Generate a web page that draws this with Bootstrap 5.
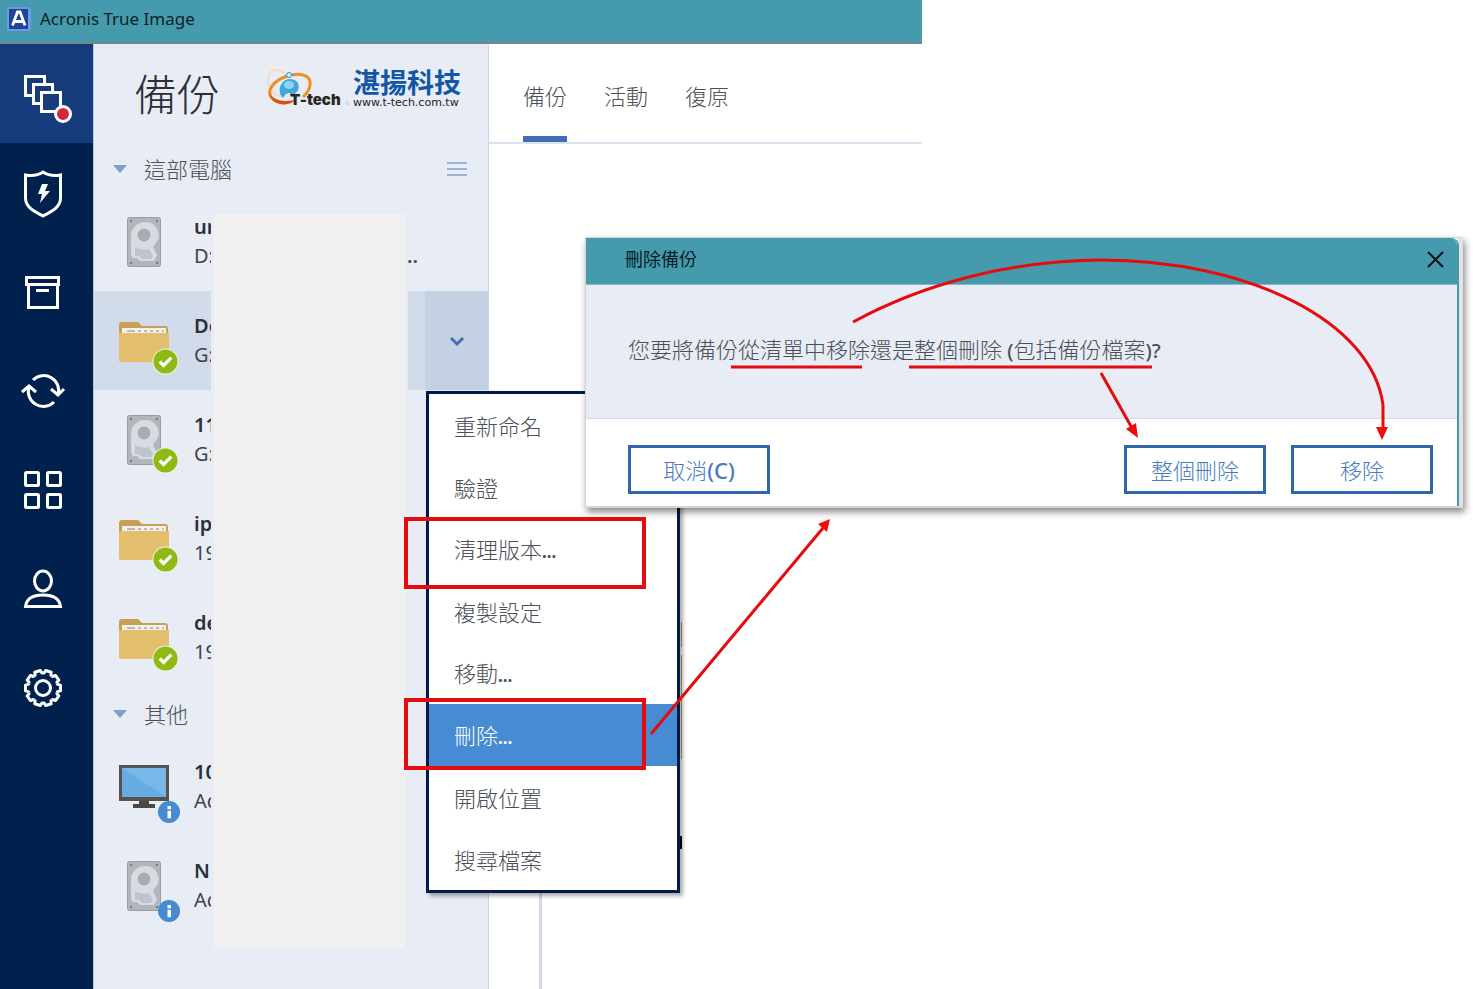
<!DOCTYPE html>
<html lang="zh-Hant">
<head>
<meta charset="utf-8">
<meta name="viewport" content="width=device-width, initial-scale=1">
<title>Acronis True Image</title>
<link href="https://cdn.jsdelivr.net/npm/bootstrap@5.3.0/dist/css/bootstrap.min.css" rel="stylesheet">
<style>
:root{--teal:#459bad;--navy:#00204d;--pane:#e7ecf5;--red:#e60b0f;--ink:#4c5058}
body{font-family:"Noto Sans","Noto Sans CJK TC",sans-serif;color:var(--ink);background:#fff;font-size:22px;line-height:30px}
.stage{min-height:100vh}
.app-window{width:62.6%;min-height:100vh}
.title-strip{height:44px;background:var(--teal);border-bottom:2px solid #71878e;color:#0c1f26;font-size:17px;line-height:24px;padding:0 7px 4px;gap:9px}
.rail{width:93px;background:var(--navy)}
.rail a{height:99px;color:#fff;padding-right:7px}
.rail a.active{background:#163c7b}
.side{width:396px;background:var(--pane);border-left:1px solid #b4c6e0;border-right:1px solid #cbd7e8}
.side-head{height:98px;padding:4px 27px 0 40px}
.side-head h1{font-size:43px;line-height:60px;font-weight:300;margin:0;color:#2b2f36}
.brand-block{padding-bottom:12px}
.section-row{height:50px;padding:4px 21px 0 19px}
.section-row h2{font-size:22px;line-height:30px;margin:0 0 0 17px;font-weight:300}
.entry{height:99px;padding-left:25px}
.entry.selected{background:#d1dbea}
.entry-text{width:17px;margin-left:25px;padding-top:20px;font-size:20px;line-height:29px;white-space:nowrap;overflow:hidden;color:#3e434c}
.entry-text b{font-weight:600;color:#2a2f38}
.dots{padding:49px 70px 0 0;font-size:20px;line-height:29px;font-weight:600}
.drop-toggle{width:63px;background:#c3d1e3;border:0;padding:0 0 4px}
.cover{left:211px;top:167px;width:197px;height:740px;background:#f1f1f1;border:3px solid var(--pane)}
.logo-name{font-size:27px;line-height:28px;font-weight:700;color:#1257a6}
.logo-url{font-family:"DejaVu Sans",sans-serif;font-size:11px;line-height:12px;color:#222}
.tabs-row{height:100px;border-bottom:2px solid #dbe2f0;padding-left:34px;gap:37px}
.tabs-row a{color:var(--ink);height:98px;padding-top:37px;text-decoration:none;font-weight:300}
.tabs-row a.active{border-bottom:6px solid #426db3}
.content-rule{width:53px;margin-top:600px;border-right:3px solid #cfd9eb}
.ctx-menu{left:426px;top:391px;width:254px;background:#fff;border:3px solid #001b4b;box-shadow:3px 3px 4px #00000055}
.ctx-menu button{height:62px;border:0;background:#fff;color:var(--ink);text-align:left;padding:2px 0 0 25px;font-weight:300}
.ctx-menu button.active{background:#478bd3;color:#fff}
.ctx-menu i{font-style:normal;font-weight:700;font-size:17px}
.dlg{left:585px;right:10px;top:237px;border:1px solid #d5d5d5;border-right:4px solid #e2e2e2;border-bottom:2px solid #d5d5d5;background:#ededed;box-shadow:2px 4px 7px #00000077}
.dlg-inner{border-right:2px solid var(--teal);border-top-right-radius:8px;background:#fff;overflow:hidden}
.dlg-head{height:47px;background:var(--teal);border-bottom:1px solid #8fb4c6;padding:0 12px 4px 39px;color:#061d24}
.dlg-head h2{font-size:18px;line-height:24px;margin:0;font-weight:400}
.dlg-head button{border:0;background:none;padding:0;width:20px;height:20px;display:flex}
.dlg-body{height:134px;background:var(--pane);border-bottom:1px solid #cfdbe9;padding:0 20px 3px 42px;font-weight:300}
.dlg-body span{font-weight:500;font-size:20px}
.dlg-foot{height:87px;padding:14px 24px 0 42px;gap:25px}
.dlg-foot button{width:142px;height:49px;background:#fff;border:3px solid #2f66ab;color:#4a7bbd;padding:1px 0 0;font-weight:300}
.dlg-foot span{font-weight:500}
.marks{left:0;top:0;pointer-events:none}
</style>
</head>
<body>
<svg width="0" height="0" class="position-absolute" aria-hidden="true">
  <defs>
    <symbol id="hdd" viewBox="0 0 54 54">
      <rect x="8.500" y="1.500" width="33" height="49" rx="2" fill="#b1b6ba" stroke="#989da1"/>
      <path d="M26 6a13 13 0 0 1 10 22q-3 3-1 5l3 6-3 6H21l-3-3h-4l-2-3V20A14 14 0 0 1 26 6z" fill="#d7dce2"/>
      <path d="M16 31q6 4 14 2l4 7-2 3H23l-3-3h-4z" fill="#bdc4cf"/>
      <circle cx="25" cy="19" r="6.500" fill="#a8adb1"/>
      <g fill="#777c80"><circle cx="12" cy="5" r="1.200"/><circle cx="38" cy="5" r="1.200"/><circle cx="12" cy="47" r="1.200"/><circle cx="38" cy="47" r="1.200"/></g>
    </symbol>
    <symbol id="folder" viewBox="0 0 54 54">
      <path d="M0 10q0-3 3-3h16l4 4h23q3 0 3 3v10H0z" fill="#c7a057"/>
      <rect x="3" y="13" width="44" height="9" fill="#f3f1ea"/>
      <path d="M8 16h8m3 0h3m3 0h3m3 0h3m3 0h3m3 0h2" stroke="#b9b9b9" stroke-width="2"/>
      <path d="M0 18h50v27q0 2-2 2H2q-2 0-2-2z" fill="#e2be6d"/>
    </symbol>
    <symbol id="monitor" viewBox="0 0 54 54">
      <path d="M0 4h50v36H0z" fill="#55524f"/><path d="M3 7h44v29H3z" fill="#66abe2"/><path d="M3 7h44v29z" fill="#78b7e7"/>
      <path d="M20 40h10v3h6v4H14v-4h6z" fill="#4b4845"/>
    </symbol>
    <symbol id="ok" viewBox="0 0 28 28"><circle cx="14" cy="14" r="13.500" fill="#eef3e6"/><circle cx="14" cy="14" r="12.500" fill="#8fba14"/><path d="M8 14l4 4 8-8" fill="none" stroke="#fff" stroke-width="3.400"/></symbol>
    <symbol id="info" viewBox="0 0 28 28"><circle cx="14" cy="14" r="11" fill="#468ad2"/><path d="M12.500 8h3.500v3.200h-3.500zM12.500 12.700h3.500v7.600h-3.500z" fill="#fff"/></symbol>
    <path id="tooth" d="M-4.600-14.200L-3.600-14.600-2.900-17.500H2.900L3.600-14.600 4.600-14.200"/>
  </defs>
</svg>

<div class="stage position-relative">
  <div class="app-window d-flex flex-column">
    <header class="title-strip d-flex align-items-center">
      <svg width="24" height="24" viewBox="0 0 24 24" aria-hidden="true"><rect width="24" height="24" rx="2" fill="#6b9be2"/><rect x="2" y="2" width="19" height="20" fill="#20429a"/><path d="M5.500 18.500L10.500 5h2.500l5 13.500M7.500 14.500h8.500" fill="none" stroke="#fff" stroke-width="2.800"/></svg>
      <span>Acronis True Image</span>
    </header>
    <div class="d-flex flex-grow-1 position-relative">
      <nav class="rail d-flex flex-column flex-shrink-0" aria-label="主選單">
        <a href="#" class="active d-flex align-items-center justify-content-center" aria-label="備份"><svg width="60" height="60" viewBox="0 0 60 60" fill="#163c7b" stroke="#fff" stroke-width="3"><path d="M12.500 12.500h19v19h-19z"/><path d="M20.500 20.500h19v19h-19z"/><path d="M28.500 28.500h19v19h-19z"/><circle cx="50" cy="50" r="7.500" fill="#d0283e"/></svg></a>
        <a href="#" class="d-flex align-items-center justify-content-center" aria-label="保護"><svg width="60" height="60" viewBox="0 0 60 60" fill="none" stroke="#fff" stroke-width="3"><path d="M12.500 12q10 2 17.500-3 7.500 5 17.500 3v23c0 9-8 13-17.500 18-9.500-5-17.500-9-17.500-18z"/><path d="M29 21h6l-3 7h5L27 40l2-9h-4z" fill="#fff" stroke="none"/></svg></a>
        <a href="#" class="d-flex align-items-center justify-content-center" aria-label="封存"><svg width="60" height="60" viewBox="0 0 60 60" fill="none" stroke="#fff" stroke-width="3"><path d="M13.500 15.500h32v7h-32zM15.500 22.500v23h29v-23M23 28.500h13"/></svg></a>
        <a href="#" class="d-flex align-items-center justify-content-center" aria-label="同步"><svg width="60" height="60" viewBox="0 0 60 60" fill="none" stroke="#fff" stroke-width="3"><path d="M20 19A15 15 0 0 1 45 34M41 41A15 15 0 0 1 16 26M38 28l7 6 6-6M9 31l7-6 7 6"/></svg></a>
        <a href="#" class="d-flex align-items-center justify-content-center" aria-label="工具"><svg width="60" height="60" viewBox="0 0 60 60" fill="none" stroke="#fff" stroke-width="3"><rect x="12.500" y="12.500" width="13" height="13" rx="1"/><rect x="34.500" y="12.500" width="13" height="13" rx="1"/><rect x="12.500" y="34.500" width="13" height="13" rx="1"/><rect x="34.500" y="34.500" width="13" height="13" rx="1"/></svg></a>
        <a href="#" class="d-flex align-items-center justify-content-center" aria-label="帳戶"><svg width="60" height="60" viewBox="0 0 60 60" fill="none" stroke="#fff" stroke-width="3"><ellipse cx="30" cy="22" rx="8.500" ry="10"/><path d="M12.500 47.500c1-8 7-11.500 17.500-11.500s16.500 3.500 17.500 11.500z"/></svg></a>
        <a href="#" class="d-flex align-items-center justify-content-center" aria-label="設定"><svg width="60" height="60" viewBox="-30 -30 60 60" fill="none" stroke="#fff" stroke-width="3" stroke-linejoin="round"><circle r="7.500"/><use href="#tooth" transform="rotate(18)"/><use href="#tooth" transform="rotate(54)"/><use href="#tooth" transform="rotate(90)"/><use href="#tooth" transform="rotate(126)"/><use href="#tooth" transform="rotate(162)"/><use href="#tooth" transform="rotate(198)"/><use href="#tooth" transform="rotate(234)"/><use href="#tooth" transform="rotate(270)"/><use href="#tooth" transform="rotate(306)"/><use href="#tooth" transform="rotate(342)"/></svg></a>
      </nav>

      <aside class="side flex-shrink-0">
        <div class="side-head d-flex align-items-center justify-content-between">
          <h1>備份</h1>
          <div class="brand-block d-flex align-items-center">
            <svg width="86" height="44" viewBox="0 0 86 44" role="img" aria-label="T-tech">
              <path d="M17 30C4 29-3 15 3 6 8 0 17 4 22 11" fill="none" stroke="#f8d9c2" stroke-width="2"/>
              <path d="M36 30C45 22 46 10 36 8 25 5 7 12 3 23c-2 8 6 13 16 13" fill="none" stroke="#ee8f2c" stroke-width="3"/>
              <path d="M2 23c0 9 12 13 26 10-5 7-26 7-26-10z" fill="#dd4e16"/>
              <path d="M16 31C9 24 14 12 23 12c12 0 11 15 1 16-2-4-6-1-8 3z" fill="#3fa9dd"/><ellipse cx="22" cy="18" rx="5" ry="4" fill="#8fd5f3"/>
              <circle cx="22" cy="8" r="2.500" fill="#d8f2ff" stroke="#2795d0"/>
              <text x="23" y="38" font-family="Inter, sans-serif" font-weight="900" font-size="15" fill="#2a2624">T-tech</text>
              <circle cx="80" cy="36" r="1.500" fill="none" stroke="#aaa" stroke-width=".5"/>
            </svg>
            <div><div class="logo-name">湛揚科技</div><div class="logo-url">www.t-tech.com.tw</div></div>
          </div>
        </div>

        <div class="section-row d-flex align-items-center">
          <svg width="14" height="8" aria-hidden="true"><path d="M0 0h14L7 8z" fill="#7f9fd0"/></svg>
          <h2>這部電腦</h2>
          <svg class="ms-auto" width="20" height="16" aria-hidden="true"><path d="M0 2h20M0 8h20M0 14h20" stroke="#9db4d7" stroke-width="2"/></svg>
        </div>
        <div class="entry d-flex"><svg class="mt-4 flex-shrink-0" width="50" height="54"><use href="#hdd" width="54" height="54"/></svg><div class="entry-text"><b>ur</b><br>D:</div><div class="dots ms-auto">..</div></div>
        <div class="entry selected d-flex"><svg class="mt-4 flex-shrink-0 overflow-visible" width="50" height="54"><use href="#folder" width="54" height="54"/><use href="#ok" x="33" y="33" width="27" height="27"/></svg><div class="entry-text"><b>De</b><br>G:</div>
          <button class="drop-toggle ms-auto" aria-label="更多選項"><svg width="16" height="12" viewBox="0 0 16 12"><path d="M2 2l6 6 6-6" fill="none" stroke="#416fac" stroke-width="3"/></svg></button></div>
        <div class="entry d-flex"><svg class="mt-4 flex-shrink-0 overflow-visible" width="50" height="54"><use href="#hdd" width="54" height="54"/><use href="#ok" x="33" y="33" width="27" height="27"/></svg><div class="entry-text"><b>11</b><br>G:</div></div>
        <div class="entry d-flex"><svg class="mt-4 flex-shrink-0 overflow-visible" width="50" height="54"><use href="#folder" width="54" height="54"/><use href="#ok" x="33" y="33" width="27" height="27"/></svg><div class="entry-text"><b>ip</b><br>19</div></div>
        <div class="entry d-flex"><svg class="mt-4 flex-shrink-0 overflow-visible" width="50" height="54"><use href="#folder" width="54" height="54"/><use href="#ok" x="33" y="33" width="27" height="27"/></svg><div class="entry-text"><b>de</b><br>19</div></div>
        <div class="section-row d-flex align-items-center">
          <svg width="14" height="8" aria-hidden="true"><path d="M0 0h14L7 8z" fill="#7f9fd0"/></svg>
          <h2>其他</h2>
        </div>
        <div class="entry d-flex"><svg class="mt-4 flex-shrink-0 overflow-visible" width="50" height="54"><use href="#monitor" width="54" height="54"/><use href="#info" x="36" y="37" width="28" height="28"/></svg><div class="entry-text"><b>10</b><br>Ac</div></div>
        <div class="entry d-flex"><svg class="mt-4 flex-shrink-0 overflow-visible" width="50" height="54"><use href="#hdd" width="54" height="54"/><use href="#info" x="36" y="37" width="28" height="28"/></svg><div class="entry-text"><b>N</b><br>Ac</div></div>
      </aside>
      <div class="cover position-absolute"></div>

      <main class="flex-grow-1 d-flex flex-column">
        <nav class="tabs-row d-flex" aria-label="分頁"><a href="#" class="active">備份</a><a href="#">活動</a><a href="#">復原</a></nav>
        <div class="content-rule flex-grow-1"></div>
      </main>
    </div>
  </div>

  <div class="ctx-menu position-absolute d-flex flex-column" role="menu">
    <button role="menuitem">重新命名</button>
    <button role="menuitem">驗證</button>
    <button role="menuitem">清理版本<i>...</i></button>
    <button role="menuitem">複製設定</button>
    <button role="menuitem">移動<i>...</i></button>
    <button role="menuitem" class="active">刪除<i>...</i></button>
    <button role="menuitem">開啟位置</button>
    <button role="menuitem">搜尋檔案</button>
  </div>

  <section class="dlg position-absolute" role="dialog" aria-labelledby="dlg-title">
    <div class="dlg-inner">
      <div class="dlg-head d-flex align-items-center justify-content-between">
        <h2 id="dlg-title">刪除備份</h2>
        <button aria-label="關閉"><svg width="20" height="20" viewBox="0 0 20 20"><path d="M3 3l15 15M18 3L3 18" stroke="#111" stroke-width="2"/></svg></button>
      </div>
      <div class="dlg-body d-flex align-items-center"><div>您要將備份從清單中移除還是整個刪除<span> (</span>包括備份檔案<span>)?</span></div></div>
      <div class="dlg-foot d-flex align-items-center">
        <button class="me-auto">取消<span>(C)</span></button>
        <button>整個刪除</button>
        <button>移除</button>
      </div>
    </div>
  </section>

  <!-- Red callouts over the menu and dialog -->
  <svg class="marks position-absolute" width="1473" height="989" viewBox="0 0 1473 989" fill="none" stroke="#e60b0f" aria-hidden="true">
    <path d="M681.500 622v25M681.500 655v104" stroke="#8a7440"/><path d="M681 836v13" stroke="#000" stroke-width="2"/>
    <rect x="406" y="519" width="238" height="68" stroke-width="4"/>
    <rect x="406" y="700" width="238" height="68" stroke-width="4"/>
    <path d="M731 367h131M909 367h243" stroke-width="3"/>
    <path d="M853 322C925 283 1010 261 1100 260 1250 260 1372 322 1383 405V428" stroke-width="3"/>
    <path d="M1101 373l31 55M651 734L823 528" stroke-width="3"/>
    <path d="M1376 427h12l-6 13zM1138 438l-12-9 10-6zM830 519l-3 13-9-8z" fill="#f30a0a" stroke="none"/>
  </svg>
</div>
<script src="https://cdn.jsdelivr.net/npm/bootstrap@5.3.0/dist/js/bootstrap.bundle.min.js"></script>
</body>
</html>
